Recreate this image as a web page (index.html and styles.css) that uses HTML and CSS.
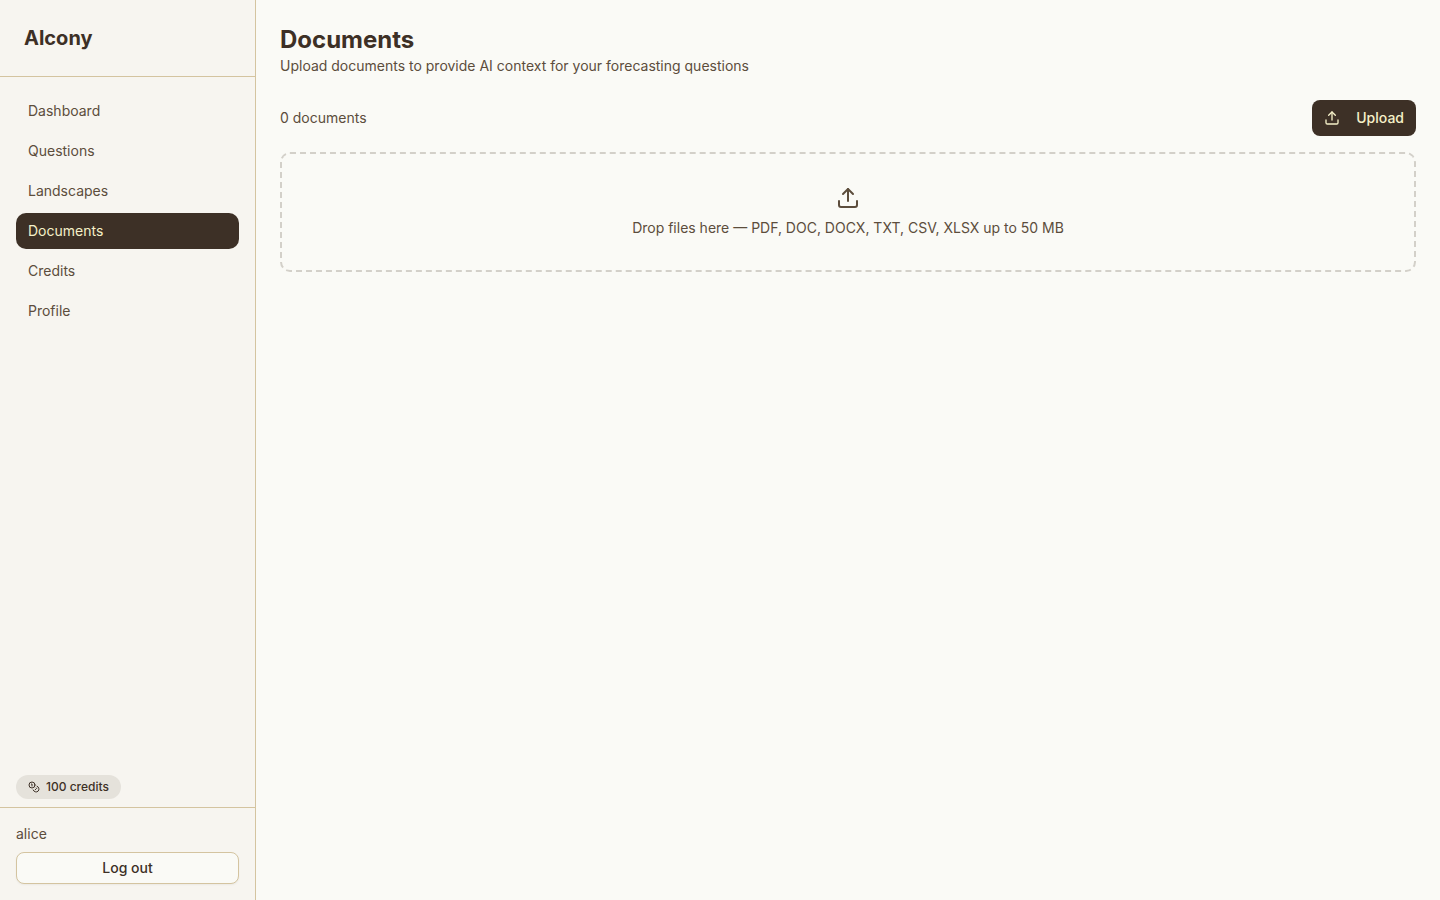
FILE: index.html
```html
<!DOCTYPE html>
<html lang="en">
<head>
  <meta charset="UTF-8" />
  <meta name="viewport" content="width=device-width, initial-scale=1.0" />
  <title>Documents - Alcony</title>
  <link rel="stylesheet" href="styles.css">
</head>
<body>
  <div class="layout">
    <aside class="sidebar">
      <div class="brand">Alcony</div>

      <nav class="nav">
        <a href="#">Dashboard</a>
        <a href="#">Questions</a>
        <a href="#">Landscapes</a>
        <a href="#" class="active" aria-current="page">Documents</a>
        <a href="#">Credits</a>
        <a href="#">Profile</a>
      </nav>

      <div class="credits">
        <a href="#" class="pill">
          <svg class="icon" width="12" height="12" viewBox="0 0 24 24" aria-hidden="true">
            <circle cx="8" cy="8" r="6" />
            <path d="M18.09 10.37A6 6 0 1 1 10.34 18" />
            <path d="M7 6h1v4" />
            <path d="m16.71 13.88.7.71-2.82 2.82" />
          </svg>
          100 credits
        </a>
      </div>

      <div class="account">
        <span class="username">alice</span>
        <button type="button" class="logout">Log out</button>
      </div>
    </aside>

    <main class="content">
      <header class="page-header">
        <h1>Documents</h1>
        <p>Upload documents to provide AI context for your forecasting questions</p>
      </header>

      <div class="toolbar">
        <p>0 documents</p>
        <button type="button" class="upload">
          <svg class="icon" width="16" height="16" viewBox="0 0 24 24" aria-hidden="true">
            <path d="M12 3v12" />
            <path d="m17 8-5-5-5 5" />
            <path d="M21 15v4a2 2 0 0 1-2 2H5a2 2 0 0 1-2-2v-4" />
          </svg>
          Upload
        </button>
      </div>

      <div class="dropzone">
        <svg class="icon" width="24" height="24" viewBox="0 0 24 24" aria-hidden="true">
          <path d="M12 3v12" />
          <path d="m17 8-5-5-5 5" />
          <path d="M21 15v4a2 2 0 0 1-2 2H5a2 2 0 0 1-2-2v-4" />
        </svg>
        <p>Drop files here — PDF, DOC, DOCX, TXT, CSV, XLSX up to 50 MB</p>
      </div>
    </main>
  </div>
</body>
</html>
```

FILE: styles.css
```css
* {
  box-sizing: border-box;
}

body {
  margin: 0;
  font-family: Inter, sans-serif;
  font-size: 14px;
  line-height: 20px;
  background: #fafaf6;
  color: #5c4d3c;
}

h1, p {
  margin: 0;
}

a {
  color: inherit;
  text-decoration: none;
}

button {
  font-family: inherit;
  font-size: 14px;
  font-weight: 500;
  line-height: 20px;
  cursor: pointer;
}

.icon {
  flex-shrink: 0;
  fill: none;
  stroke: currentColor;
  stroke-width: 2;
  stroke-linecap: round;
  stroke-linejoin: round;
}

.layout {
  display: flex;
  min-height: 100vh;
}

/* Sidebar */
.sidebar {
  display: flex;
  flex-direction: column;
  flex-shrink: 0;
  width: 256px;
  background: #f7f5f0;
  border-right: 1px solid #d4c4a0;
}

.brand {
  padding: 24px;
  font-size: 20px;
  font-weight: 700;
  line-height: 28px;
  color: #3d3026;
  border-bottom: 1px solid #d4c4a0;
}

.nav {
  display: flex;
  flex-direction: column;
  flex: 1;
  gap: 4px;
  padding: 16px;
}

.nav a {
  padding: 8px 12px;
  border-radius: 10px;
}

.nav a:hover {
  background: #e5e2db;
}

.nav a.active {
  background: #3d3026;
  color: #f5f0c8;
}

.credits {
  display: flex;
  padding: 0 16px 8px;
}

.pill {
  display: flex;
  align-items: center;
  gap: 6px;
  padding: 4px 12px;
  border-radius: 12px;
  background: #e5e2db;
  color: #3d3026;
  font-size: 12px;
  font-weight: 500;
  line-height: 16px;
}

.account {
  display: flex;
  flex-direction: column;
  gap: 8px;
  padding: 16px;
  border-top: 1px solid #d4c4a0;
}

.logout {
  padding: 5px 12px;
  border: 1px solid #d4c4a0;
  border-radius: 8px;
  background: #fafaf6;
  color: #3d3026;
  box-shadow: 0 1px 2px rgba(0, 0, 0, 0.05);
}

/* Documents page */
.content {
  display: flex;
  flex-direction: column;
  flex: 1;
  padding: 24px;
}

.page-header {
  margin-bottom: 24px;
}

.page-header h1 {
  font-size: 24px;
  font-weight: 700;
  line-height: 32px;
  color: #3d3026;
}

.toolbar {
  display: flex;
  align-items: center;
  justify-content: space-between;
  margin-bottom: 16px;
}

.upload {
  display: flex;
  align-items: center;
  gap: 16px;
  padding: 8px 12px;
  border: none;
  border-radius: 8px;
  background: #3d3026;
  color: #f5f0c8;
}

.dropzone {
  display: flex;
  flex-direction: column;
  align-items: center;
  gap: 8px;
  padding: 32px;
  border: 2px dashed #d3d0c9;
  border-radius: 10px;
  text-align: center;
}
```
